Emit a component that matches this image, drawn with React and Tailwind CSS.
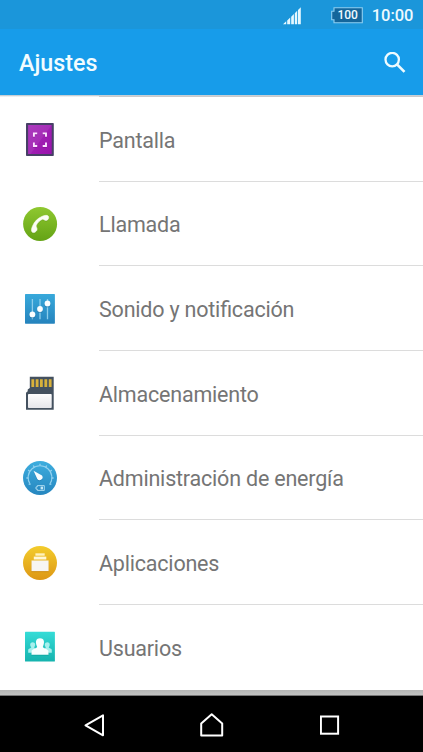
import React from 'react';

const iconClass = 'w-9 h-9 shrink-0';

const DisplayIcon = () => (
  <svg viewBox="0 0 36 36" className={iconClass}>
    <defs>
      <linearGradient id="display" x1="0" y1="0" x2="1" y2="1">
        <stop offset="0" stopColor="#a52bb8" />
        <stop offset="1" stopColor="#9a12ad" />
      </linearGradient>
    </defs>
    <rect x="4" y="0.9" width="27.8" height="33.2" rx="0.8" fill="#474066" />
    <rect x="6.1" y="3" width="23.6" height="29" fill="url(#display)" />
    <path d="M6.1 3H29.7L8.5 32H6.1Z" fill="#fff" opacity="0.07" />
    <path d="M15.2 12.2H11.9V15.4M20.7 12.2H24V15.4M15.2 24.9H11.9V21.7M20.7 24.9H24V21.7" fill="none" stroke="#701080" strokeWidth="1.9" opacity="0.5" />
    <path d="M15.2 11.4H11.9V14.8M20.7 11.4H24V14.8M15.2 24H11.9V20.6M20.7 24H24V20.6" fill="none" stroke="#fbe3ff" strokeWidth="1.9" />
  </svg>
);

const CallIcon = () => (
  <svg viewBox="0 0 36 36" className={iconClass}>
    <defs>
      <linearGradient id="call" x1="0" y1="0" x2="0" y2="1">
        <stop offset="0" stopColor="#8fc830" />
        <stop offset="1" stopColor="#64a315" />
      </linearGradient>
    </defs>
    <circle cx="18.1" cy="18" r="17" fill="url(#call)" />
    <path d="M10.4 26.3C9 25 9.3 22.9 10.6 19.9C12.5 15.4 15.8 12.1 20.3 10.3C22.8 9.3 25.2 8.9 26.2 10.1C27 11.3 26.8 12.6 25.8 13.7C25 14.6 23.6 14.8 22.5 14.1L20.9 13.1C17.8 14.3 15.1 17 14 20L14.7 21.7C15.3 22.9 15.1 24.2 14.2 25.2C13 26.5 11.5 27 10.4 26.3Z" fill="#3f7d08" opacity="0.4" transform="translate(0 1)" />
    <path d="M10.4 26.3C9 25 9.3 22.9 10.6 19.9C12.5 15.4 15.8 12.1 20.3 10.3C22.8 9.3 25.2 8.9 26.2 10.1C27 11.3 26.8 12.6 25.8 13.7C25 14.6 23.6 14.8 22.5 14.1L20.9 13.1C17.8 14.3 15.1 17 14 20L14.7 21.7C15.3 22.9 15.1 24.2 14.2 25.2C13 26.5 11.5 27 10.4 26.3Z" fill="#fbfdf5" stroke="#fbfdf5" strokeWidth="0.6" />
  </svg>
);

const SoundIcon = () => (
  <svg viewBox="0 0 36 36" className={iconClass}>
    <defs>
      <linearGradient id="sound" x1="0" y1="0" x2="0" y2="1">
        <stop offset="0" stopColor="#38a9db" />
        <stop offset="1" stopColor="#2583bd" />
      </linearGradient>
    </defs>
    <rect x="3" y="3" width="29.9" height="29.7" rx="0.6" fill="url(#sound)" />
    <path d="M10.4 8V28.2M18 8V28.2M25.5 8V28.2" stroke="#8ccdec" strokeWidth="1.3" />
    <g fill="#145f91" opacity="0.4">
      <circle cx="10.4" cy="24.4" r="3" />
      <circle cx="18" cy="19" r="3" />
      <circle cx="25.5" cy="13.5" r="3" />
    </g>
    <g fill="#fbfeff">
      <circle cx="10.4" cy="23.4" r="2.9" />
      <circle cx="18" cy="18" r="2.9" />
      <circle cx="25.5" cy="12.4" r="2.9" />
    </g>
  </svg>
);

const StorageIcon = () => (
  <svg viewBox="0 0 36 36" className={iconClass}>
    <defs>
      <linearGradient id="storage" x1="0" y1="0" x2="0" y2="1">
        <stop offset="0" stopColor="#fdfdfe" />
        <stop offset="1" stopColor="#e6e6ea" />
      </linearGradient>
    </defs>
    <g transform="translate(0 0.9)">
      <path d="M7.8 0.8H31.7V33.8H4V16.9L5.7 15.4V13.6L7.8 12Z" fill="#44515f" />
      <path d="M10.8 3.3V11.2M15.1 3.3V11.2M19.4 3.3V11.2M23.8 3.3V11.2M28.2 3.3V11.2" stroke="#d8b13b" strokeWidth="2.8" />
      <rect x="6" y="18.1" width="23.7" height="14" rx="0.8" fill="url(#storage)" />
    </g>
  </svg>
);

const PowerIcon = () => (
  <svg viewBox="0 0 36 36" className={iconClass}>
    <defs>
      <linearGradient id="power" x1="0" y1="0" x2="0" y2="1">
        <stop offset="0" stopColor="#3dadde" />
        <stop offset="1" stopColor="#2686bf" />
      </linearGradient>
    </defs>
    <circle cx="18" cy="18" r="17" fill="url(#power)" />
    <path d="M8.3 24.5A11.9 11.9 0 1 1 27.7 24.5" fill="none" stroke="#92d1ef" strokeWidth="1.1" />
    <path d="M8.3 24.5L6.6 24M6.1 18H4.4M7.8 11.4L6.2 10.1M12.4 7.4L11.3 5.5M18 5.8V3.7M23.6 7.4L24.7 5.5M28.2 11.4L29.8 10.1M29.9 18H31.6M27.7 24.5L29.4 24" stroke="#92d1ef" strokeWidth="1.3" />
    <path d="M11.5 10.7L20 15.5A2.9 2.9 0 1 1 15.3 18.9Z" fill="#1766a0" opacity="0.4" transform="translate(0 1)" />
    <path d="M11.5 10.7L20 15.5A2.9 2.9 0 1 1 15.3 18.9Z" fill="#f9fdff" />
    <path d="M15.3 25.6H22.3V30.4H15.3V29.1H14V26.9H15.3Z" fill="none" stroke="#a7d8ef" strokeWidth="1" />
    <path d="M18.6 26.6H21V29.4H18.6Z" fill="#c5e7f6" />
  </svg>
);

const AppsIcon = () => (
  <svg viewBox="0 0 36 36" className={iconClass}>
    <defs>
      <linearGradient id="apps" x1="0" y1="0" x2="0" y2="1">
        <stop offset="0" stopColor="#f3cc2c" />
        <stop offset="1" stopColor="#dd9715" />
      </linearGradient>
    </defs>
    <circle cx="18" cy="18" r="17" fill="url(#apps)" />
    <path d="M9.4 16H26.6V27.2H9.4Z" fill="#ae6c06" opacity="0.35" />
    <path d="M13.4 8.3H22.7V10.7H13.4Z" fill="#fff2bd" />
    <path d="M11.8 11.6H24.3V14.5H11.8Z" fill="#fff7d8" />
    <path d="M9.5 15.5H26.6V26.1H9.5Z" fill="#f7f5f2" />
  </svg>
);

const UsersIcon = () => (
  <svg viewBox="0 0 36 36" className={iconClass}>
    <defs>
      <linearGradient id="users" x1="0" y1="0" x2="0" y2="1">
        <stop offset="0" stopColor="#35dcd7" />
        <stop offset="1" stopColor="#15b3ae" />
      </linearGradient>
    </defs>
    <rect x="3" y="2.7" width="29.9" height="29.8" rx="0.6" fill="url(#users)" />
    <path d="M6.2 23.8V20.8C6.2 19.5 9 19.1 9.3 18.4C7.5 16 8 13.2 10.7 13.2S13.9 16 12.1 18.4L14 20V23.8ZM29.8 23.8V20.8C29.8 19.5 27 19.1 26.7 18.4C28.5 16 28 13.2 25.3 13.2S22.1 16 23.9 18.4L22 20V23.8Z" fill="#a6f0ed" />
    <path d="M9.5 26.8V23.2C9.8 20.7 14.6 20.3 15.8 18.8C13.2 15 13.4 9.6 18 9.6S22.8 15 20.2 18.8C21.4 20.3 26.2 20.7 26.5 23.2V26.8Z" fill="#078984" opacity="0.35" />
    <path d="M9.5 25.8V22.2C9.8 19.9 14.4 19.5 15.2 17.9C13.4 14.4 13 9.3 18 9.3S22.6 14.4 20.8 17.9C21.6 19.5 26.2 19.9 26.5 22.2V25.8Z" fill="#f8ffff" />
  </svg>
);

const items = [
  { label: 'Pantalla', Icon: DisplayIcon },
  { label: 'Llamada', Icon: CallIcon },
  { label: 'Sonido y notificación', Icon: SoundIcon },
  { label: 'Almacenamiento', Icon: StorageIcon },
  { label: 'Administración de energía', Icon: PowerIcon },
  { label: 'Aplicaciones', Icon: AppsIcon },
  { label: 'Usuarios', Icon: UsersIcon },
];

const StatusBar = () => (
  <div className="h-[29px] shrink-0 bg-[#1b96da] flex items-center justify-end pr-[9.5px] pt-[2px] text-[#eefaff]">
    <svg width="18" height="18" viewBox="0 0 18 18" className="mr-[30px]" fill="#e6f8ff">
      <path d="M0 17.3L3.2 14.3V17.3ZM4.2 13.4L7.2 10.6V17.3H4.2ZM8.2 9.7L10.9 7.1V17.3H8.2ZM11.8 6.2L14.2 3.8V17.3H11.8ZM15 3L17.8 0.2V17.3H15Z" />
    </svg>
    <div className="relative w-[32px] h-[17px] mr-[9px] flex items-center justify-center">
      <svg viewBox="0 0 32 17" className="absolute inset-0 w-full h-full">
        <path d="M3 0.7H31.3V15.8H3V12.7H0.7V4.3H3Z" fill="#14669b" stroke="#8fd0f2" strokeWidth="1.1" />
      </svg>
      <span className="relative pl-[2px] pb-[1px] text-[12px] leading-none font-medium">100</span>
    </div>
    <span className="pt-[1px] text-[16.5px] leading-none font-medium">10:00</span>
  </div>
);

const Header = () => (
  <header className="h-[66px] shrink-0 bg-[#179cea] flex items-center justify-between pl-[19px] pr-[17.5px] pt-[2px]">
    <h1 className="pt-[2px] text-[23.3px] leading-none font-medium text-[#f2fcff]">Ajustes</h1>
    <svg width="22" height="22" viewBox="0 0 22 22" fill="none" stroke="#effbff" strokeWidth="2.3">
      <circle cx="8.2" cy="7.6" r="6.7" />
      <path d="M13 12.4L20.5 19.9" strokeWidth="2.7" />
    </svg>
  </header>
);

const NavBar = () => (
  <nav className="h-[56px] shrink-0 bg-black flex items-center justify-between px-[83px] pt-[3px]">
    <svg width="22" height="24" viewBox="0 0 22 24" fill="none" stroke="#fff" strokeWidth="2">
      <path d="M20 2.3V22.3L2.5 12.4Z" strokeLinejoin="round" />
    </svg>
    <svg width="26" height="24" viewBox="0 0 26 24" fill="none" stroke="#fff" strokeWidth="2">
      <path d="M1.2 22.4V10.4L11.7 1.3L22.2 10.4V22.4Z" strokeLinejoin="round" />
    </svg>
    <svg width="20" height="20" viewBox="0 0 20 20" fill="none" stroke="#fff" strokeWidth="2">
      <rect x="0.9" y="1.5" width="17.2" height="17.2" />
    </svg>
  </nav>
);

const App = () => {
  return (
    <div className="w-[423px] h-[752px] overflow-hidden bg-white flex flex-col font-['Roboto',sans-serif]">
      <StatusBar />
      <Header />
      {/* Shadow under the action bar */}
      <div className="h-[2.3px] shrink-0 bg-linear-to-b from-[#b5bfc7] to-white flex items-end pl-[99px]">
        <div className="h-px w-full bg-[#c9c9cb]" />
      </div>
      <main className="h-[592.7px] shrink-0 overflow-hidden">
        {items.map(({ label, Icon }, i) => (
          <div key={label} className="h-[84.6px] flex items-stretch pl-[22px]">
            <div className="flex items-center">
              <Icon />
            </div>
            <div className={`ml-[41px] flex-1 flex items-center pt-[3px] ${i < items.length - 1 ? 'border-b border-[#dcdcdc]' : ''}`}>
              {/* Letter spacing turns ligatures off, so ask for them explicitly */}
              <span className="text-[21.5px] leading-none tracking-[-0.2px] [font-feature-settings:'liga'_1] text-[#757575] whitespace-nowrap">{label}</span>
            </div>
          </div>
        ))}
      </main>
      <div className="h-[6px] shrink-0 bg-linear-to-b from-[#b5b6b5] to-[#c2c3c2] border-b border-[#777]" />
      <NavBar />
    </div>
  );
};

export default App;
